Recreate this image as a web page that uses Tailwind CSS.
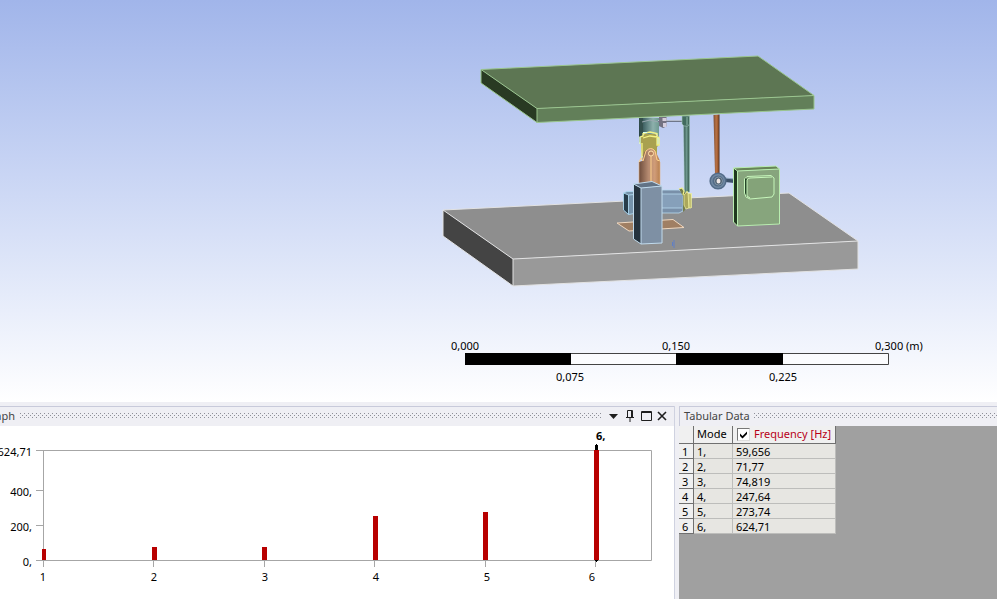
<!DOCTYPE html>
<html lang="en">
<head>
<meta charset="utf-8">
<meta name="viewport" content="width=device-width, initial-scale=1">
<title>Modal analysis</title>
<script src="https://cdn.jsdelivr.net/npm/@tailwindcss/browser@4"></script>
</head>
<body class="h-screen flex flex-col overflow-hidden bg-[#efeff4] font-['Noto_Sans','Open_Sans',sans-serif] text-[11px] leading-[14px] text-black">

<!-- 3D viewport -->
<main class="flex-1 min-h-0 bg-linear-to-b from-[#a1b5ea] to-white">
  <svg class="block w-full h-full" viewBox="0 0 997 402" role="img" aria-label="Assembly model with scale">
    <defs>
      <linearGradient id="teal" x1="0" x2="1" y1="0" y2="0"><stop offset="0" stop-color="#20383a"/><stop offset=".25" stop-color="#46686a"/><stop offset=".7" stop-color="#8db0ac"/><stop offset="1" stop-color="#6e9a90"/></linearGradient>
      <linearGradient id="copper" x1="0" x2="1" y1="0" y2="0"><stop offset="0" stop-color="#6d4c3c"/><stop offset=".45" stop-color="#b58a70"/><stop offset=".75" stop-color="#d09c78"/><stop offset="1" stop-color="#b8804f"/></linearGradient>
      <linearGradient id="rod" x1="0" x2="1" y1="0" y2="0"><stop offset="0" stop-color="#7e4c30"/><stop offset=".45" stop-color="#b77348"/><stop offset=".7" stop-color="#a55d2f"/><stop offset="1" stop-color="#4c2f24"/></linearGradient>
      <linearGradient id="link" x1="0" x2="1" y1="0" y2="0"><stop offset="0" stop-color="#31504b"/><stop offset=".5" stop-color="#6c978b"/><stop offset="1" stop-color="#35564d"/></linearGradient>
    </defs>

    <!-- base plate -->
    <g stroke-linejoin="round">
      <path d="M443 210 789 193 858 241 513 259Z" fill="#8e8e8e"/>
      <path d="M443 210 513 259 513 286 443 236Z" fill="#444"/>
      <path d="M513 259 858 241 858 269 513 286Z" fill="#999"/>
      <path d="M443 236V210L789 193 858 241V269L513 286 443 236M443 210 513 259 858 241M513 259V286" fill="none" stroke="#e2e2e2"/>
    </g>
    <path d="M617 223 673 219.500 684 227.500 629 231Z" fill="#a07f63" stroke="#f0d8c0"/>
    <path d="M674 240V248M672.500 242V246" stroke="#607fc4" fill="none"/>

    <!-- central column -->
    <path d="M639 118H659V137L657 134H643L641 143 639 142Z" fill="url(#teal)"/>
    <path d="M639 118H643V143L640 144Z" fill="#35504e"/>
    <path d="M658 121H683" stroke="#6e7689" stroke-width="2"/>
    <path d="M658 120.500H683" stroke="#b4bccd" stroke-width="1"/>
    <path d="M642 122 650 120 658 122" stroke="#9aa8b0" fill="none"/>
    <path d="M659 117H666.500V126.500L663 128 659 126Z" fill="#747281"/>
    <path d="M662.500 118H666.500V121H662.500ZM663 123H666.500V127H663Z" fill="#d5cedc"/>
    <path d="M683.500 116H689.500V192H684.500Z" fill="url(#link)" stroke="#98c6b4" stroke-width=".5"/>
    <path d="M682 116H689.500V124L688 126H684L682 124Z" fill="#426b5e" stroke="#a8cabe" stroke-width=".6"/>
    <path d="M687 117V125" stroke="#8db8a7"/>
    <path d="M641 148V136L645 134H655L659 137V145L657 147V156H642Z" fill="#a9a14f"/>
    <path d="M640 144V137L643 136V133.500L650 132 657 133.500V137L659 138V145L657 145V138M643 138 650 136 657 137M642 143V158" fill="none" stroke="#f4f486" stroke-width="1.300"/>
    <path d="M640 137V144M643 132.500H647M658 138V144" fill="none" stroke="#d9fff0"/>
    <path d="M639 162 642 161 644 152Q650 145 656 152L660 161V186H639Z" fill="url(#copper)"/>
    <path d="M639 162 641 158 643 161 646 151Q651 146 655 151L657 160 660 161M651 156V181" fill="none" stroke="#ffd28c"/>
    <circle cx="651" cy="153.500" r="2.500" fill="#b78060" stroke="#ffe2aa"/>
    <path d="M639 162V186M660 162V185" stroke="#e4b483" stroke-width=".6" fill="none"/>

    <!-- motor -->
    <path d="M662 190H679L683 193V211L679 213H662Z" fill="#7990a9"/>
    <path d="M662 194H682V208H662Z" fill="#86a0ba"/>
    <path d="M662 190H679L683 193V211L679 213H662M662 194H682M662 208H682" fill="none" stroke="#b9daf0" stroke-width=".8"/>
    <path d="M679 189 682 188 685 192V210L683 212V196ZM685 193 687 191V208H685Z" fill="#747d4c"/>
    <path d="M679 189 682 188 684 191 683 195M687 191V208M691 193V208" fill="none" stroke="#eef18c" stroke-width="1.200"/>
    <path d="M684 195 687 192 689 194V208L686 209 684 205ZM688 193 691 194V208H689Z" fill="#aaa75c" stroke="#f4f4a0" stroke-width=".7"/>
    <path d="M623.500 193 627 191.500 640 191 639 212 628 215 623.500 210Z" fill="#7693ab"/>
    <path d="M623.500 193 628.500 195V214.500L623.500 210Z" fill="#283d4b"/>
    <path d="M623.500 210V193L627 191.500 640 191.500M623.500 193 628.500 195 640 194M628.500 195V214.500L640 212.500M623.500 210 628.500 214.500M637 195V212" fill="none" stroke="#aed8ef" stroke-width=".9"/>
    <path d="M633.500 184 652 181.500 662 186 641 188Z" fill="#627386"/>
    <path d="M633.500 184 641 188V244L633.500 239Z" fill="#26333e"/>
    <path d="M641 188 662 186V243L641 244Z" fill="#7e90a4"/>
    <path d="M633.500 239V184L652 181.500 662 186V243L641 244 633.500 239M633.500 184 641 188 662 186M641 188V244" fill="none" stroke="#c1dbed"/>

    <!-- hanging rod and bearing -->
    <path d="M713.500 115 719.500 114.500V174H715Z" fill="url(#rod)"/>
    <path d="M725 178 734 179V183L725 182Z" fill="#3e526a"/>
    <path d="M725 178 734 179" stroke="#8da5bd"/>
    <circle cx="718" cy="181" r="8.600" fill="#526b88"/>
    <circle cx="718" cy="181" r="6.300" fill="none" stroke="#7189a3" stroke-width="1.500"/>
    <circle cx="718.500" cy="181" r="4" fill="#4d5f71" stroke="#8496a6"/>
    <ellipse cx="718.500" cy="181" rx="2" ry="2.600" fill="#eee7e6"/>

    <!-- green housing -->
    <path d="M733.500 168 776 166 779.500 169 737.500 171Z" fill="#678457"/>
    <path d="M733.500 168 737.500 171V226L733.500 222Z" fill="#20391f"/>
    <path d="M737.500 171 779.500 169V224L737.500 226Z" fill="#87a57d"/>
    <path d="M733.500 222V168L776 166 779.500 169V224L737.500 226 733.500 222M733.500 168 737.500 171 779.500 169M737.500 171V226" fill="none" stroke="#b9edb0"/>
    <path d="M744.500 179 747 176.500 771 175.500 774 178V194L772 197 750 199 746 197 744.500 193Z" fill="#84a379" stroke="#c6f6bb"/>
    <path d="M745 179V193L747 197V180L746 178Z" fill="#244527"/>
    <path d="M747 196V180Q748 178 750 178L772 177M747 196 750 198" fill="none" stroke="#c6f6bb"/>

    <!-- upper plate -->
    <path d="M481 69.500 758 56 814 95.500 537 108.500Z" fill="#5d7653"/>
    <path d="M481 69.500 537 108.500V122.500L481 83Z" fill="#293a23"/>
    <path d="M537 108.500 814 95.500V109L537 122.500Z" fill="#627f59"/>
    <path d="M481 83V69.500L758 56 814 95.500V109L537 122.500 481 83M481 69.500 537 108.500 814 95.500M537 108.500V122.500" fill="none" stroke="#9bc68e"/>

    <!-- scale -->
    <path d="M465 353.500H888.500V364.500H465" fill="#fff" fill-opacity=".6" stroke="#444"/>
    <path d="M465 353H571V365H465ZM676 353H783V365H676Z" fill="#000"/>
    <g text-anchor="middle" class="text-[11px]">
      <text x="465" y="350">0,000</text>
      <text x="676" y="350">0,150</text>
      <text x="899" y="350">0,300 (m)</text>
      <text x="570" y="381">0,075</text>
      <text x="783" y="381">0,225</text>
    </g>
  </svg>
</main>

<div class="flex shrink-0 gap-1 pt-1">
  <!-- graph panel -->
  <section class="flex-1 min-w-0 flex flex-col border-r border-[#cfd2e0]">
    <header class="h-5 flex items-center border-t border-[#c8cada] text-[#444] pr-1 pb-[2px]">
      <h2 class="w-[15px] shrink-0 flex justify-end overflow-hidden">Graph</h2>
      <svg class="flex-1 min-w-0 h-[5px] ml-[5px] mr-1" aria-hidden="true"><defs><pattern id="grip" width="4" height="4" patternUnits="userSpaceOnUse"><path d="M0 0h1v1h-1zM2 2h1v1h-1z" fill="#8e8f98"/></pattern></defs><rect width="100%" height="5" fill="url(#grip)"/></svg>
      <div class="flex text-[#1e1e1e]">
        <button type="button" aria-label="Panel options" class="w-4 h-4 grid place-items-center"><svg width="16" height="16"><path d="M3 6h9l-4.500 5z" fill="currentColor"/></svg></button>
        <button type="button" aria-label="Pin" class="w-4 h-4 grid place-items-center"><svg width="16" height="16" fill="none" stroke="currentColor"><path d="M5.500 9V2.500H10.500V9M9.500 2.500V9M4 9.500H12M8 10V14"/></svg></button>
        <button type="button" aria-label="Maximize" class="w-4 h-4 grid place-items-center"><svg width="16" height="16" fill="none" stroke="currentColor"><path d="M3.500 3.500H13.500V12.500H3.500ZM3 4.500H14"/></svg></button>
        <button type="button" aria-label="Close" class="w-4 h-4 grid place-items-center"><svg width="16" height="16" fill="none" stroke="currentColor" stroke-width="1.600"><path d="M4 4 12 12M12 4 4 12"/></svg></button>
      </div>
    </header>
    <svg class="block w-full bg-white" viewBox="0 0 674 173" role="img" aria-label="Frequency by mode">
      <path d="M36 24.500H651.500V134.500H36M43.500 24V141M36 64.500H43M36 99.500H43M153.500 134V141M264.500 134V141M374.500 134V141M485.500 134V141M595.500 134V141" fill="none" stroke="#a6a6a6"/>
      <g fill="#b80000">
        <path d="M42 123h4v11h-4zM152 121h5v13h-5zM262 121h5v13h-5zM373 90h5v44h-5zM483 86h5v48h-5z"/>
        <path d="M595 19h3v6h-3zM596 18h1v1h-1zM595 134h3v1h-1v1h-1v-1h-1z" fill="#000"/>
        <path d="M594 24h5v110h-5z"/>
      </g>
      <g class="text-[11px]">
        <g text-anchor="end">
          <text x="32" y="30">624,71</text>
          <text x="32" y="70">400,</text>
          <text x="32" y="105">200,</text>
          <text x="32" y="140">0,</text>
        </g>
        <g text-anchor="middle">
          <text x="43" y="155">1</text>
          <text x="154" y="155">2</text>
          <text x="265" y="155">3</text>
          <text x="376" y="155">4</text>
          <text x="487" y="155">5</text>
          <text x="592" y="155">6</text>
        </g>
        <text x="596" y="14" class="font-bold">6,</text>
      </g>
    </svg>
  </section>

  <!-- tabular data panel -->
  <section class="w-[318px] shrink-0 flex flex-col bg-[#a0a0a0]">
    <header class="h-5 flex items-center bg-[#efeff4] border-t border-l border-[#c8cada] text-[#444] pl-1 pb-[2px]">
      <h2 class="shrink-0">Tabular Data</h2>
      <svg class="flex-1 min-w-0 h-[5px] ml-1" aria-hidden="true"><rect width="100%" height="5" fill="url(#grip)"/></svg>
    </header>
    <table class="w-[157px] table-fixed border-separate border-spacing-0 text-left">
      <colgroup><col class="w-[15px]"><col class="w-[39px]"><col></colgroup>
      <thead>
        <tr class="h-[18px] bg-[#f0f0f0] *:font-normal *:p-0 *:align-top *:border-b *:border-r *:border-[#707070]">
          <th aria-label="Row"></th>
          <th><span class="block pl-[3px] leading-4">Mode</span></th>
          <th>
            <label class="flex items-center h-4 pl-1 gap-1 text-[#b80018] whitespace-nowrap">
              <span class="relative block size-[13px]">
                <input type="checkbox" checked class="block appearance-none size-[13px] bg-white border border-t-[#777] border-l-[#777] border-r-[#ddd] border-b-[#ddd]">
                <svg class="absolute inset-0 pointer-events-none" width="13" height="13" aria-hidden="true"><path d="M3 5.500 5.500 8 10 3.500V6L5.500 10.500 3 8Z" fill="#000"/></svg>
              </span>
              <span>Frequency [Hz]</span>
            </label>
          </th>
        </tr>
      </thead>
      <tbody class="bg-[#e7e6e2] leading-3 *:h-[15px] **:[th]:bg-[#f0f0f0] **:[th]:font-normal **:[th]:p-0 **:[th]:pt-[2px] **:[th]:pl-[3px] **:[th]:border-r **:[th]:border-b **:[th]:border-[#707070] **:[td]:p-0 **:[td]:pt-[2px] **:[td]:pl-[3px] **:[td]:border-r **:[td]:border-b **:[td]:border-[#bdbdbb]">
        <tr><th scope="row">1</th><td>1,</td><td>59,656</td></tr>
        <tr><th scope="row">2</th><td>2,</td><td>71,77</td></tr>
        <tr><th scope="row">3</th><td>3,</td><td>74,819</td></tr>
        <tr><th scope="row">4</th><td>4,</td><td>247,64</td></tr>
        <tr><th scope="row">5</th><td>5,</td><td>273,74</td></tr>
        <tr><th scope="row">6</th><td>6,</td><td>624,71</td></tr>
      </tbody>
    </table>
  </section>
</div>
</body>
</html>
